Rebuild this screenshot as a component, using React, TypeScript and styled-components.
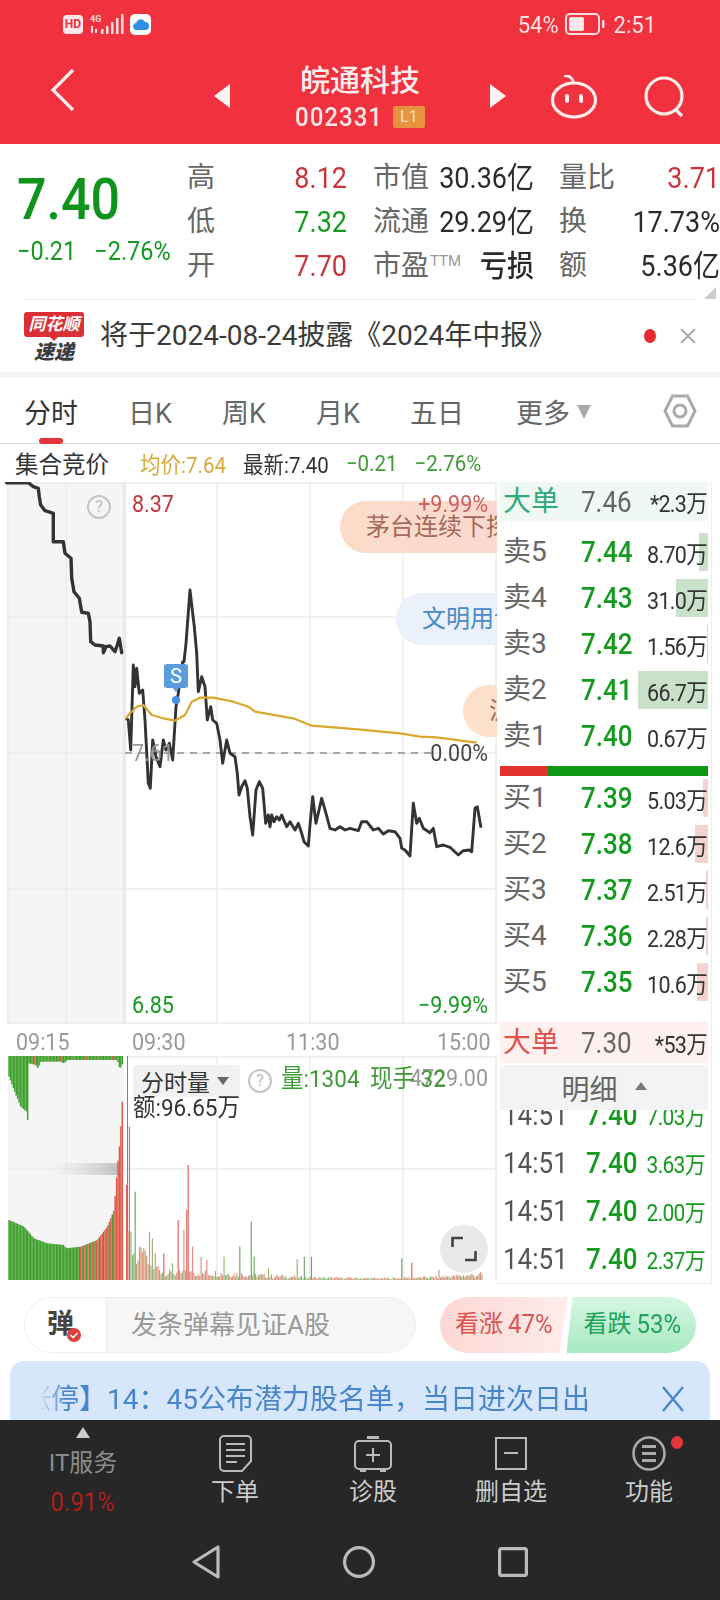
import React from "react";
import styled, { createGlobalStyle, css } from "styled-components";

const GlobalStyle = createGlobalStyle`
  html, body { margin: 0; padding: 0; background: #fff; }
  body { font-family: Roboto, "Noto Sans CJK SC", sans-serif; width: 720px; }
  * { box-sizing: border-box; }
`;

const GREEN = "#149a1f";
const RED = "#c9343c";
const tall = css`
  display: inline-block;
  transform: scaleY(1.1);
  white-space: nowrap;
`;

const Page = styled.div`
  width: 720px;
  height: 1600px;
  overflow: hidden;
  display: flex;
  flex-direction: column;
  background: #fff;
`;

/* ---------- red header ---------- */
const RedHeader = styled.header`
  height: 144px;
  background: #f2313e;
  color: #fff;
`;
const StatusBar = styled.div`
  height: 50px;
  display: flex;
  align-items: center;
  padding: 0 64px 2px 63px;
`;
const HdBadge = styled.span`
  width: 20px;
  height: 19px;
  border-radius: 4px;
  background: #fde9ea;
  color: #e8323f;
  font: 700 12px/19px Roboto, sans-serif;
  text-align: center;
`;
const CloudBadge = styled.span`
  width: 21px;
  height: 21px;
  border-radius: 5px;
  background: #fff;
  margin-left: 6px;
  display: flex;
  align-items: center;
  justify-content: center;
`;
const StatusSpacer = styled.div`
  flex: 1;
`;
const StatusText = styled.span`
  ${tall};
  font-size: 22px;
  color: #fbe3e4;
`;
const Battery = styled.svg`
  margin: 0 9px 0 6px;
`;
const NavRow = styled.div`
  height: 94px;
  display: grid;
  grid-template-columns: 214px 16px 260px 16px 1fr;
  align-items: center;
`;
const BackCell = styled.div`
  padding: 0 0 14px 50px;
  display: flex;
`;
const SideTri = styled.svg`
  margin-bottom: 2px;
`;
const TitleCell = styled.div`
  display: flex;
  flex-direction: column;
  align-items: center;
`;
const StockName = styled.div`
  font-size: 30px;
  line-height: 36px;
  font-weight: 500;
  color: #fbeeee;
  margin-top: 0;
`;
const CodeRow = styled.div`
  display: flex;
  align-items: center;
  gap: 10px;
  height: 28px;
  margin-top: 4px;
`;
const StockCode = styled.span`
  ${tall};
  font-size: 24px;
  font-weight: 500;
  letter-spacing: 1px;
  color: #fbe9e9;
`;
const LevelBadge = styled.span`
  width: 32px;
  height: 22px;
  background: #e9923f;
  border-radius: 2px;
  color: #fbe0c4;
  font-size: 16px;
  line-height: 22px;
  text-align: center;
`;
const HeaderIcons = styled.div`
  display: flex;
  align-items: center;
  padding-left: 44px;
  gap: 46px;
`;

/* ---------- quote ---------- */
const QuoteGrid = styled.section`
  height: 155px;
  position: relative;
  display: grid;
  grid-template-columns: 187px 80px 80px 26px 64px 97px 25px 60px 101px;
  grid-template-rows: repeat(3, 44px);
  padding-top: 12px;
  align-items: center;
`;
const PriceBlock = styled.div`
  grid-row: 1 / span 3;
  grid-column: 1;
  padding-left: 17px;
  align-self: start;
`;
const BigPrice = styled.div`
  ${tall};
  font-size: 52px;
  line-height: 64px;
  margin-top: 12px;
  font-weight: 500;
  color: #0f931b;
`;
const PriceChanges = styled.div`
  display: flex;
  gap: 18px;
  margin-top: 5px;
  line-height: 28px;
`;
const ChangeText = styled.span`
  ${tall};
  font-size: 23.5px;
  color: #149a1f;
`;
const QuoteLabel = styled.span<{ $col: number }>`
  grid-column: ${(p) => p.$col};
  font-size: 28px;
  line-height: 36px;
  color: #666;
  white-space: nowrap;
`;
const Ttm = styled.sup`
  font-size: 15px;
  line-height: 0;
  color: #999;
  vertical-align: 9px;
  margin-left: 1px;
`;
const QuoteValue = styled.span<{ $col: number; $color?: string; $weight?: number }>`
  ${tall};
  grid-column: ${(p) => p.$col};
  justify-self: end;
  font-size: 27px;
  line-height: 36px;
  color: ${(p) => p.$color || "#2a2a2a"};
  font-weight: ${(p) => p.$weight || 400};
`;
const CornerMark = styled.span`
  position: absolute;
  right: 4px;
  bottom: 0;
  width: 0;
  height: 0;
  border-left: 12px solid transparent;
  border-bottom: 12px solid #ccc;
`;

/* ---------- notice ---------- */
const NoticeRow = styled.section`
  margin: 0 24px;
  border-top: 1px solid #eee;
  height: 73px;
  display: flex;
  align-items: center;
`;
const BrandLogo = styled.div`
  width: 60px;
  display: flex;
  flex-direction: column;
  align-items: center;
  margin-top: 4px;
`;
const BrandFlag = styled.span`
  position: relative;
  width: 60px;
  height: 25px;
  background: #dc2f35;
  border-radius: 3px;
  color: #fff;
  font-size: 17px;
  line-height: 25px;
  font-style: italic;
  font-weight: 700;
  text-align: center;
  &::after {
    content: "";
    position: absolute;
    left: 25px;
    bottom: -4px;
    border-top: 5px solid #dc2f35;
    border-left: 5px solid transparent;
    border-right: 5px solid transparent;
  }
`;
const BrandName = styled.span`
  font-size: 20px;
  line-height: 24px;
  font-style: italic;
  font-weight: 900;
  color: #3c3c3c;
  margin-top: 3px;
`;
const NoticeText = styled.div`
  margin-left: 16px;
  flex: 1;
  font-size: 28px;
  line-height: 40px;
  color: #3a3a3a;
  white-space: nowrap;
`;
const NoticeDot = styled.span`
  width: 12px;
  height: 14px;
  border-radius: 50%;
  background: #e4282e;
  margin-right: 24px;
`;
const GapBand = styled.div`
  height: 6px;
  background: #f5f5f5;
`;

/* ---------- tabs ---------- */
const TabBar = styled.nav`
  height: 66px;
  border-bottom: 1px solid #ddd;
  display: grid;
  grid-template-columns: 104px 94px 94px 94px 106px 147px 1fr;
  padding: 0 24px 0 24px;
  align-items: center;
`;
const Tab = styled.div<{ $active?: boolean }>`
  position: relative;
  display: flex;
  align-items: center;
  height: 66px;
  font-size: 27px;
  color: ${(p) => (p.$active ? "#333" : "#666")};
  ${(p) =>
    p.$active &&
    css`
      &::after {
        content: "";
        position: absolute;
        left: 15px;
        bottom: 0;
        width: 24px;
        height: 6px;
        border-radius: 3px;
        background: #e4343c;
      }
    `}
`;
const TabCaret = styled.span`
  width: 0;
  height: 0;
  margin: 2px 0 0 7px;
  border-top: 14px solid #aaa;
  border-left: 7px solid transparent;
  border-right: 7px solid transparent;
`;
const SettingsCell = styled.div`
  justify-self: end;
  display: flex;
`;

const InfoRow = styled.div`
  height: 38px;
  display: flex;
  align-items: center;
  padding-left: 15px;
  gap: 17px;
`;
const AuctionTitle = styled.span`
  font-size: 23.5px;
  color: #333;
  margin-right: 14px;
`;
const InfoStat = styled.span<{ $color: string }>`
  ${tall};
  font-size: 20.5px;
  color: ${(p) => p.$color};
`;

/* ---------- main ---------- */
const MainGrid = styled.section`
  height: 798px;
  display: grid;
  grid-template-columns: 497px 215px;
`;
const ChartColumn = styled.div`
  display: flex;
  flex-direction: column;
`;
const PriceChart = styled.div`
  position: relative;
  height: 542px;
  overflow: hidden;
`;
const ChartSvg = styled.svg`
  position: absolute;
  inset: 0;
  display: block;
`;
const ChartLabel = styled.span<{ $color: string; $top: number; $left?: number; $right?: number; $size?: number }>`
  ${tall};
  position: absolute;
  top: ${(p) => p.$top}px;
  ${(p) => (p.$left !== undefined ? `left:${p.$left}px;` : "")}
  ${(p) => (p.$right !== undefined ? `right:${p.$right}px;` : "")}
  font-size: ${(p) => p.$size || 21.5}px;
  line-height: 26px;
  color: ${(p) => p.$color};
`;
const FloatPill = styled.div<{ $top: number; $left: number; $bg: string; $color: string }>`
  position: absolute;
  top: ${(p) => p.$top}px;
  left: ${(p) => p.$left}px;
  height: 52px;
  border-radius: 26px;
  padding: 0 0 0 26px;
  width: 300px;
  background: ${(p) => p.$bg};
  color: ${(p) => p.$color};
  font-size: 24px;
  line-height: 52px;
  white-space: nowrap;
`;
const HelpCircle = styled.span<{ $top: number; $left: number }>`
  position: absolute;
  top: ${(p) => p.$top}px;
  left: ${(p) => p.$left}px;
  width: 24px;
  height: 24px;
  border: 2px solid #c4c4c4;
  border-radius: 50%;
  color: #bbb;
  font-size: 16px;
  line-height: 20px;
  text-align: center;
`;
const SignalBadge = styled.span`
  position: absolute;
  left: 164px;
  top: 182px;
  width: 24px;
  height: 24px;
  border-radius: 3px;
  background: #5a9bdf;
  color: #fff;
  font-size: 20px;
  line-height: 24px;
  text-align: center;
  &::after {
    content: "";
    position: absolute;
    left: 8px;
    bottom: -4px;
    border-top: 5px solid #5a9bdf;
    border-left: 4px solid transparent;
    border-right: 4px solid transparent;
  }
`;
const TimeAxis = styled.div`
  height: 32px;
  display: grid;
  grid-template-columns: 116px 154px 151px 1fr;
  padding: 2px 9px 0 16px;
  align-items: center;
`;
const TimeTick = styled.span<{ $end?: boolean }>`
  ${tall};
  font-size: 21.5px;
  color: #999;
  justify-self: ${(p) => (p.$end ? "end" : "start")};
`;
const VolumeChart = styled.div`
  position: relative;
  height: 224px;
  overflow: hidden;
`;
const VolumeChip = styled.div`
  position: absolute;
  left: 133px;
  top: 9px;
  width: 107px;
  height: 32px;
  background: #f1f1f1;
  border-radius: 3px;
  display: flex;
  align-items: center;
  padding-left: 8px;
  font-size: 23px;
  color: #333;
  &::after {
    content: "";
    margin-left: 7px;
    border-top: 8px solid #666;
    border-left: 6px solid transparent;
    border-right: 6px solid transparent;
  }
`;
const ExpandButton = styled.span`
  position: absolute;
  left: 440px;
  top: 169px;
  width: 48px;
  height: 48px;
  border-radius: 50%;
  background: #e9e9e9;
  display: flex;
  align-items: center;
  justify-content: center;
`;

/* ---------- order book ---------- */
const BookPanel = styled.aside`
  padding: 0 3px;
  border-right: 1px solid #eee;
  border-bottom: 1px solid #eee;
  display: flex;
  flex-direction: column;
`;
const BigOrder = styled.div<{ $tint: string; $top: number; $h: number }>`
  height: ${(p) => p.$h}px;
  margin-top: ${(p) => p.$top}px;
  background: ${(p) => p.$tint};
  display: grid;
  grid-template-columns: 78px 60px 1fr;
  padding: 0 1px 0 3px;
  align-items: center;
  flex: none;
`;
const BigLabel = styled.span<{ $color: string }>`
  font-size: 28px;
  line-height: 36px;
  color: ${(p) => p.$color};
`;
const BigPriceCell = styled.span`
  ${tall};
  font-size: 26px;
  color: #666;
`;
const VolumeCell = styled.span<{ $color?: string; $size?: number }>`
  ${tall};
  justify-self: end;
  position: relative;
  font-size: ${(p) => p.$size || 21.5}px;
  letter-spacing: -0.7px;
  color: ${(p) => p.$color || "#333"};
`;
const BookRows = styled.div<{ $top: number }>`
  margin-top: ${(p) => p.$top}px;
  flex: none;
`;
const BookRow = styled.div`
  position: relative;
  height: 46px;
  display: grid;
  grid-template-columns: 78px 60px 1fr;
  padding: 0 1px 0 3px;
  align-items: center;
`;
const DepthBar = styled.span<{ $color: string }>`
  position: absolute;
  top: 4px;
  bottom: 4px;
  right: 0;
  background: ${(p) => p.$color};
`;
const BookLabel = styled.span`
  position: relative;
  font-size: 28px;
  line-height: 36px;
  color: #666;
`;
const BookPrice = styled.span`
  ${tall};
  position: relative;
  font-size: 26px;
  font-weight: 500;
  color: ${GREEN};
`;
const SplitBar = styled.div`
  margin-top: 7px;
  height: 10px;
  flex: none;
  background: linear-gradient(90deg, #e5322e 0 48px, #0f9614 48px);
`;
const DetailHeader = styled.div`
  margin-top: 2px;
  height: 45px;
  flex: none;
  background: #f3f3f3;
  color: #666;
  font-size: 28px;
  display: flex;
  align-items: center;
  justify-content: center;
  position: relative;
  z-index: 1;
  &::after {
    content: "";
    margin: 0 0 4px 17px;
    border-bottom: 8px solid #777;
    border-left: 6px solid transparent;
    border-right: 6px solid transparent;
  }
`;
const TickList = styled.div`
  flex: 1;
  overflow: hidden;
`;
const TickRows = styled.div`
  margin-top: -19px;
`;
const TickRow = styled.div`
  height: 48px;
  display: grid;
  grid-template-columns: 83px 60px 1fr;
  padding: 0 3px;
  align-items: center;
`;
const TickTime = styled.span`
  ${tall};
  font-size: 26px;
  color: #555;
`;
const TickPrice = styled.span`
  ${tall};
  font-size: 26px;
  font-weight: 500;
  color: ${GREEN};
`;

/* ---------- barrage ---------- */
const BarrageRow = styled.section`
  height: 81px;
  padding: 17px 24px 0;
  display: flex;
  justify-content: space-between;
`;
const BarrageInput = styled.div`
  width: 392px;
  height: 56px;
  border: 1px solid #eee;
  border-radius: 28px;
  background: #f6f6f6;
  display: flex;
  overflow: hidden;
`;
const BarrageIcon = styled.div`
  position: relative;
  width: 82px;
  background: #fff;
  border-right: 1px solid #eee;
  color: #444;
  font-size: 27px;
  font-weight: 700;
  line-height: 52px;
  padding-left: 22px;
`;
const BarrageCheck = styled.svg`
  position: absolute;
  left: 42px;
  top: 30px;
`;
const BarragePlaceholder = styled.div`
  padding-left: 24px;
  font-size: 26px;
  line-height: 54px;
  color: #999;
`;
const VoteGroup = styled.div`
  width: 256px;
  height: 56px;
  display: flex;
`;
const VoteButton = styled.div<{ $up?: boolean }>`
  flex: 1;
  font-size: 24px;
  line-height: 54px;
  white-space: nowrap;
  ${(p) =>
    p.$up
      ? css`
          margin-right: -1px;
          padding-left: 15px;
          color: #d9534f;
          background: linear-gradient(90deg, #fcd7d4, #fdeceb);
          border-radius: 28px 0 0 28px;
          clip-path: polygon(0 0, 100% 0, calc(100% - 8px) 100%, 0 100%);
        `
      : css`
          padding-left: 17px;
          color: #1ea35a;
          background: linear-gradient(180deg, #d5f6e2, #a8e9c0);
          border-radius: 0 28px 28px 0;
          clip-path: polygon(6px 0, 100% 0, 100% 100%, 0 100%);
        `}
`;
const VoteNumber = styled.span`
  ${tall};
  margin-left: 5px;
  font-size: 24px;
`;
const BlueBar = styled.section`
  margin: 0 10px;
  height: 59px;
  background: #d6e6fb;
  border-radius: 14px 14px 0 0;
  display: flex;
  align-items: flex-start;
  padding: 19px 26px 0 30px;
  overflow: hidden;
`;
const BlueTextClip = styled.div`
  flex: 1;
  overflow: hidden;
  -webkit-mask-image: linear-gradient(90deg, transparent 0, #000 26px);
  mask-image: linear-gradient(90deg, transparent 0, #000 26px);
`;
const BlueText = styled.div`
  margin-left: -17px;
  font-size: 28px;
  line-height: 40px;
  color: #4a84cc;
  white-space: nowrap;
`;

/* ---------- bottom ---------- */
const DarkFooter = styled.footer`
  flex: 1;
  background: #272727;
  display: flex;
  flex-direction: column;
`;
const ToolRow = styled.div`
  height: 110px;
  display: grid;
  grid-template-columns: 166px repeat(4, 138px);
`;
const SectorCell = styled.div`
  display: flex;
  flex-direction: column;
  align-items: center;
  padding-top: 7px;
  &::before {
    content: "";
    border-bottom: 11px solid #ccc;
    border-left: 7px solid transparent;
    border-right: 7px solid transparent;
  }
`;
const SectorName = styled.span`
  margin-top: 11px;
  font-size: 24px;
  line-height: 28px;
  color: #8c8c8c;
`;
const SectorRate = styled.span`
  ${tall};
  margin-top: 11px;
  font-size: 24px;
  line-height: 28px;
  color: #b21f1f;
`;
const ToolItem = styled.div`
  position: relative;
  display: flex;
  flex-direction: column;
  align-items: center;
  padding-top: 15px;
`;
const ToolIconBox = styled.div`
  height: 37px;
  display: flex;
  align-items: center;
`;
const ToolLabel = styled.span`
  margin-top: 6px;
  font-size: 24px;
  line-height: 28px;
  color: #ccc;
`;
const RedDot = styled.span`
  position: absolute;
  left: 91px;
  top: 16px;
  width: 12px;
  height: 13px;
  border-radius: 50%;
  background: #e8343c;
`;
const SystemNav = styled.div`
  padding: 15px 0 0 192px;
  display: flex;
  align-items: center;
  gap: 123px;
`;

/* ---------- chart data ---------- */
type P = [number, number];
const toPoly = (pts: P[], oy: number) => pts.map(([x, y]) => `${(x / 3).toFixed(1)},${(y / 3 + oy).toFixed(1)}`).join(" ");

const pre: P[] = [[20,8],[85,8],[100,20],[115,25],[118,50],[122,75],[135,92],[160,100],[160,185],[190,185],[195,220],[213,235],[215,295],[222,335],[238,355],[245,397],[265,400],[270,425],[272,485],[285,495],[310,498],[310,518],[318,500],[330,498],[345,515],[352,495],[358,475],[365,518]];
const intraday: P[] = [[378,715],[385,720],[392,810],[400,555],[405,620],[410,565],[418,640],[428,630],[435,720],[445,910],[451,925],[458,780],[468,830],[480,860],[490,780],[498,810],[508,790],[518,840],[528,680],[535,640],[540,600],[548,545],[552,545],[558,490],[570,330],[578,400],[583,440],[590,520],[595,635],[605,590],[615,620],[622,720],[632,680],[638,720],[650,730],[660,780],[668,850],[680,780],[690,820],[705,830],[712,880],[717,945],[725,920],[735,902],[742,925],[750,1010],[758,1065],[768,930],[778,905],[788,925],[797,1030],[805,1005],[810,1040],[815,1005],[822,1025],[830,1010],[838,1020],[845,1005],[860,1040],[870,1025],[885,1050],[895,1030],[905,1060],[912,1085],[925,1098],[930,1035],[938,950],[948,1030],[965,955],[978,1000],[990,1045],[1005,1050],[1020,1040],[1035,1050],[1050,1045],[1075,1052],[1085,1025],[1100,1025],[1120,1050],[1135,1045],[1150,1062],[1165,1052],[1185,1055],[1200,1075],[1205,1105],[1215,1110],[1230,1128],[1240,970],[1250,1030],[1258,1015],[1270,1045],[1290,1058],[1300,1045],[1310,1100],[1330,1095],[1350,1102],[1375,1125],[1390,1112],[1408,1110],[1415,1115],[1425,985],[1432,980],[1443,1043]];
const avg: P[] = [[378,715],[390,700],[410,680],[430,675],[455,705],[490,715],[525,722],[555,705],[575,665],[600,653],[640,653],[700,665],[745,680],[765,695],[880,715],[935,737],[1075,748],[1200,760],[1260,770],[1310,772],[1430,788]];

const interp = (pts: P[], x: number) => {
  if (x <= pts[0][0]) return pts[0][1];
  for (let i = 1; i < pts.length; i++) {
    if (x <= pts[i][0]) {
      const [a, b] = pts[i - 1];
      const [c, d] = pts[i];
      return b + ((d - b) * (x - a)) / (c - a);
    }
  }
  return pts[pts.length - 1][1];
};
const rand = (i: number) => {
  const s = Math.sin(i * 12.9898) * 43758.5453;
  return s - Math.floor(s);
};
const hangEnv: P[] = [[25,80],[40,120],[60,170],[78,185],[82,220],[85,40],[105,45],[112,55],[120,35],[180,35],[190,40],[200,30],[350,30],[358,58],[368,35]];
const riseEnv: P[] = [[25,510],[70,530],[100,565],[140,580],[190,585],[195,595],[240,590],[290,570],[320,530],[340,480],[350,350],[358,270],[365,150]];
const baseEnv: P[] = [[378,560],[420,610],[500,665],[650,665],[800,675],[950,682],[1150,684],[1300,680],[1445,670]];
const peaks: P[] = [[385,230],[378,405],[392,545],[405,425],[418,590],[430,595],[445,545],[455,565],[465,610],[488,610],[515,640],[533,510],[548,540],[565,345],[560,480],[575,590],[600,620],[620,630],[670,620],[717,590],[750,515],[760,620],[805,655],[888,628],[910,620],[932,620],[1205,625],[1235,638],[1315,660]];
const redPeaks = [385, 378, 533, 565, 560, 488, 1235];
const greenPeaks = [405, 750, 717, 760, 1205, 910, 932];

const preBars = Array.from({ length: 80 }, (_, i) => {
  const zx = 25 + i * 4.3;
  return { x: zx / 3, hang: interp(hangEnv, zx) / 3 - 6, top: interp(riseEnv, zx) / 3 - 6, col: zx < 240 || (zx < 345 && i % 3 === 0) ? "#3fa02d" : "#e25a4a" };
});
const dayBars = Array.from({ length: 249 }, (_, i) => {
  const zx = 378 + i * 4.3;
  const base = interp(baseEnv, zx);
  let top = 690 - (690 - base) * (0.35 + 0.9 * rand(i));
  let col = "";
  const r = rand(i + 500);
  col = r < 0.33 ? "#8cb878" : r < 0.66 ? "#e88a80" : "#c0a070";
  for (const [px, py] of peaks) {
    if (Math.abs(px - zx) < 2.2) {
      top = py;
      if (redPeaks.includes(px)) col = "#e0605a";
      if (greenPeaks.includes(px)) col = "#6aa860";
    }
  }
  return { x: zx / 3, top: top / 3 - 6, col };
});

const BookData = [
  ["卖5", "7.44", "8.70万", 9],
  ["卖4", "7.43", "31.0万", 32],
  ["卖3", "7.42", "1.56万", 1],
  ["卖2", "7.41", "66.7万", 70],
  ["卖1", "7.40", "0.67万", 0],
] as const;
const BuyData = [
  ["买1", "7.39", "5.03万", 5],
  ["买2", "7.38", "12.6万", 13],
  ["买3", "7.37", "2.51万", 2],
  ["买4", "7.36", "2.28万", 2],
  ["买5", "7.35", "10.6万", 11],
] as const;
const Ticks = ["7.03万", "3.63万", "2.00万", "2.37万"];
const vGrid = [66, 217, 310, 403, 496];

export default function App() {
  return (
    <Page>
      <GlobalStyle />
      <RedHeader>
        <StatusBar>
          <HdBadge>HD</HdBadge>
          <svg width="34" height="22" viewBox="0 0 34 22" style={{ marginLeft: 7 }}>
            <text x="0" y="9" fontSize="9" fontWeight="700" fill="#fbdcdc" fontFamily="Roboto">4G</text>
            <g fill="#fbdcdc">
              <rect x="1" y="13" width="2" height="7" /><rect x="5" y="16" width="2" height="4" />
              <rect x="11" y="16" width="2.5" height="5" /><rect x="16" y="13" width="2.5" height="8" />
              <rect x="21" y="9" width="2.5" height="12" /><rect x="26" y="5" width="2.5" height="16" /><rect x="31" y="1" width="2.5" height="20" />
            </g>
          </svg>
          <CloudBadge>
            <svg width="16" height="12" viewBox="0 0 16 12"><path d="M4 12a3.5 3.5 0 0 1-.6-7A4.5 4.5 0 0 1 12 4a4 4 0 0 1 0 8z" fill="#2d8fe6" /></svg>
          </CloudBadge>
          <StatusSpacer />
          <StatusText>54%</StatusText>
          <Battery width="40" height="22" viewBox="0 0 40 22">
            <rect x="1" y="1" width="33" height="20" rx="4" fill="none" stroke="#fbdcdc" strokeWidth="2" />
            <rect x="4" y="4" width="15" height="14" rx="2" fill="#fbe9e9" />
            <rect x="37" y="7" width="2.5" height="8" rx="1" fill="#fbdcdc" />
          </Battery>
          <StatusText>2:51</StatusText>
        </StatusBar>
        <NavRow>
          <BackCell>
            <svg width="26" height="44" viewBox="0 0 26 44"><path d="M23 2 3 22l20 20" fill="none" stroke="#fdeeee" strokeWidth="3.2" /></svg>
          </BackCell>
          <SideTri width="16" height="24" viewBox="0 0 16 24"><path d="M16 0v24L0 12z" fill="#fdf2f2" /></SideTri>
          <TitleCell>
            <StockName>皖通科技</StockName>
            <CodeRow>
              <StockCode>002331</StockCode>
              <LevelBadge>L1</LevelBadge>
            </CodeRow>
          </TitleCell>
          <SideTri width="16" height="24" viewBox="0 0 16 24"><path d="M0 0v24l16-12z" fill="#fdf2f2" /></SideTri>
          <HeaderIcons>
            <svg width="48" height="44" viewBox="0 0 48 44" fill="none" stroke="#fdeeee" strokeWidth="3.2">
              <path d="M14 1c5-1 9 2 10 8" strokeWidth="2.8" />
              <ellipse cx="24" cy="25" rx="21.5" ry="17" />
              <rect x="15" y="19" width="4" height="9" rx="2" fill="#fdeeee" stroke="none" />
              <rect x="29" y="19" width="4" height="9" rx="2" fill="#fdeeee" stroke="none" />
            </svg>
            <svg width="42" height="42" viewBox="0 0 42 42" fill="none" stroke="#fdeeee" strokeWidth="3.2">
              <circle cx="20" cy="20" r="18" />
              <path d="m31 33 7 7" />
            </svg>
          </HeaderIcons>
        </NavRow>
      </RedHeader>

      <QuoteGrid>
        <PriceBlock>
          <BigPrice>7.40</BigPrice>
          <PriceChanges>
            <ChangeText>−0.21</ChangeText>
            <ChangeText>−2.76%</ChangeText>
          </PriceChanges>
        </PriceBlock>
        <QuoteLabel $col={2}>高</QuoteLabel>
        <QuoteValue $col={3} $color={RED}>8.12</QuoteValue>
        <QuoteLabel $col={5}>市值</QuoteLabel>
        <QuoteValue $col={6}>30.36亿</QuoteValue>
        <QuoteLabel $col={8}>量比</QuoteLabel>
        <QuoteValue $col={9} $color={RED}>3.71</QuoteValue>
        <QuoteLabel $col={2}>低</QuoteLabel>
        <QuoteValue $col={3} $color={GREEN}>7.32</QuoteValue>
        <QuoteLabel $col={5}>流通</QuoteLabel>
        <QuoteValue $col={6}>29.29亿</QuoteValue>
        <QuoteLabel $col={8}>换</QuoteLabel>
        <QuoteValue $col={9}>17.73%</QuoteValue>
        <QuoteLabel $col={2}>开</QuoteLabel>
        <QuoteValue $col={3} $color={RED}>7.70</QuoteValue>
        <QuoteLabel $col={5}>市盈<Ttm>TTM</Ttm></QuoteLabel>
        <QuoteValue $col={6} $weight={500}>亏损</QuoteValue>
        <QuoteLabel $col={8}>额</QuoteLabel>
        <QuoteValue $col={9}>5.36亿</QuoteValue>
        <CornerMark />
      </QuoteGrid>

      <NoticeRow>
        <BrandLogo>
          <BrandFlag>同花顺</BrandFlag>
          <BrandName>速递</BrandName>
        </BrandLogo>
        <NoticeText>将于2024-08-24披露《2024年中报》</NoticeText>
        <NoticeDot />
        <svg width="16" height="16" viewBox="0 0 16 16"><path d="m1 1 14 14M15 1 1 15" stroke="#aaa" strokeWidth="2" /></svg>
      </NoticeRow>
      <GapBand />

      <TabBar>
        <Tab $active>分时</Tab>
        <Tab>日K</Tab>
        <Tab>周K</Tab>
        <Tab>月K</Tab>
        <Tab>五日</Tab>
        <Tab>更多<TabCaret /></Tab>
        <SettingsCell>
          <svg width="34" height="34" viewBox="0 0 34 34" fill="none" stroke="#aaa" strokeWidth="3">
            <path d="M9.5 2h15L32 17l-7.500 15h-15L2 17z" />
            <circle cx="17" cy="17" r="6" />
          </svg>
        </SettingsCell>
      </TabBar>

      <InfoRow>
        <AuctionTitle>集合竞价</AuctionTitle>
        <InfoStat $color="#d8a93a">均价:7.64</InfoStat>
        <InfoStat $color="#333">最新:7.40</InfoStat>
        <InfoStat $color="#3f9a35">−0.21</InfoStat>
        <InfoStat $color="#3f9a35">−2.76%</InfoStat>
      </InfoRow>

      <MainGrid>
        <ChartColumn>
          <PriceChart>
            <ChartSvg width="497" height="542" viewBox="0 0 497 542">
              <rect x="8" y="0" width="116" height="542" fill="#f5f5f5" />
              <g stroke="#ebebeb" strokeWidth="1.5">
                {vGrid.map((x) => <line key={x} x1={x} y1="0" x2={x} y2="542" />)}
                {[1, 135, 271, 407, 541].map((y) => <line key={y} x1="8" y1={y} x2="497" y2={y} />)}
                <line x1="8" y1="0" x2="8" y2="542" />
              </g>
              <line x1="124.500" y1="0" x2="124.500" y2="542" stroke="#e9e9e9" strokeWidth="3" />
              <line x1="125" y1="271" x2="432" y2="271" stroke="#a8a8a8" strokeWidth="2" strokeDasharray="7 6" />
              <polyline points={toPoly(pre, -2)} fill="none" stroke="#333" strokeWidth="3.4" strokeLinejoin="round" strokeLinecap="round" />
              <polyline points={toPoly(intraday, -2)} fill="none" stroke="#333" strokeWidth="2.9" strokeLinejoin="round" />
              <polyline points={toPoly(avg, -2)} fill="none" stroke="#d8a82c" strokeWidth="2.2" strokeLinejoin="round" />
              <circle cx="176" cy="218" r="4" fill="#4a8fe0" />
            </ChartSvg>
            <HelpCircle $top={13} $left={87}>?</HelpCircle>
            <FloatPill $top={19} $left={340} $bg="linear-gradient(90deg,#fbdcc8,#fcd5d5)" $color="#a5685a">茅台连续下探</FloatPill>
            <FloatPill $top={111} $left={396} $bg="#eaf1fb" $color="#4a8ac8">文明用语</FloatPill>
            <FloatPill $top={203} $left={463} $bg="#fbe0cc" $color="#a5685a">沪</FloatPill>
            <SignalBadge>S</SignalBadge>
            <ChartLabel $top={9} $left={132} $color="#c0353a">8.37</ChartLabel>
            <ChartLabel $top={9} $right={9} $color="#c9605a">+9.99%</ChartLabel>
            <ChartLabel $top={258} $left={132} $color="#999">7.61</ChartLabel>
            <ChartLabel $top={258} $right={9} $color="#444">0.00%</ChartLabel>
            <ChartLabel $top={510} $left={132} $color={GREEN}>6.85</ChartLabel>
            <ChartLabel $top={510} $right={9} $color={GREEN}>−9.99%</ChartLabel>
          </PriceChart>
          <TimeAxis>
            <TimeTick>09:15</TimeTick>
            <TimeTick>09:30</TimeTick>
            <TimeTick>11:30</TimeTick>
            <TimeTick $end>15:00</TimeTick>
          </TimeAxis>
          <VolumeChart>
            <ChartSvg width="497" height="224" viewBox="0 0 497 224">
              <defs>
                <linearGradient id="smear" x1="0" x2="1" y1="0" y2="0">
                  <stop offset="0" stopColor="#d8d8d8" stopOpacity="0" />
                  <stop offset="1" stopColor="#b0b0b0" stopOpacity="0.8" />
                </linearGradient>
              </defs>
              <rect x="8" y="0" width="116" height="224" fill="#f5f5f5" />
              <g stroke="#ebebeb" strokeWidth="1.5">
                {vGrid.map((x) => <line key={x} x1={x} y1="0" x2={x} y2="224" />)}
                <line x1="8" y1="113" x2="497" y2="113" />
                <line x1="8" y1="1" x2="497" y2="1" />
              </g>
              <rect x="48" y="107" width="72" height="12" fill="url(#smear)" />
              {preBars.map((b, i) => (
                <g key={i}>
                  <rect x={b.x} y="0" width="1.45" height={Math.max(b.hang, 0)} fill={b.x * 3 < 85 ? "#3fa02d" : i % 9 === 0 ? "#e25a4a" : "#3fa02d"} />
                  <rect x={b.x} y={b.top} width="1.45" height={224 - b.top} fill={b.col} />
                </g>
              ))}
              <line x1="127.500" y1="0" x2="127.500" y2="224" stroke="#d0605a" strokeWidth="1" />
              {dayBars.map((b, i) => <rect key={i} x={b.x} y={b.top} width="1.15" height={224 - b.top} fill={b.col} />)}
            </ChartSvg>
            <VolumeChip>分时量</VolumeChip>
            <HelpCircle $top={13} $left={248}>?</HelpCircle>
            <ChartLabel $top={9} $right={9} $color="#999">4729.00</ChartLabel>
            <ChartLabel $top={9} $left={281} $color="#3f9a35" $size={22.5}>量:1304</ChartLabel>
            <ChartLabel $top={9} $left={370} $color="#3f9a35" $size={22.5}>现手 32</ChartLabel>
            <ChartLabel $top={38} $left={133} $color="#333" $size={22.5}>额:96.65万</ChartLabel>
            <ExpandButton>
              <svg width="26" height="26" viewBox="0 0 26 26" fill="none" stroke="#444" strokeWidth="2.6">
                <path d="M1.500 11V2H12M24.500 15v9H14" />
              </svg>
            </ExpandButton>
          </VolumeChart>
        </ChartColumn>

        <BookPanel>
          <BigOrder $tint="#eff8f3" $top={0} $h={39}>
            <BigLabel $color="#2eaa7e">大单</BigLabel>
            <BigPriceCell>7.46</BigPriceCell>
            <VolumeCell>*2.3万</VolumeCell>
          </BigOrder>
          <BookRows $top={8}>
            {BookData.map(([l, p, v, w]) => (
              <BookRow key={l}>
                {w > 0 && <DepthBar $color="#c9e0c9" style={{ width: w }} />}
                <BookLabel>{l}</BookLabel>
                <BookPrice>{p}</BookPrice>
                <VolumeCell>{v}</VolumeCell>
              </BookRow>
            ))}
          </BookRows>
          <SplitBar />
          <BookRows $top={-1}>
            {BuyData.map(([l, p, v, w]) => (
              <BookRow key={l}>
                <DepthBar $color="#f3d2d2" style={{ width: w }} />
                <BookLabel>{l}</BookLabel>
                <BookPrice>{p}</BookPrice>
                <VolumeCell>{v}</VolumeCell>
              </BookRow>
            ))}
          </BookRows>
          <BigOrder $tint="#fdf0ef" $top={17} $h={41}>
            <BigLabel $color="#e0504a">大单</BigLabel>
            <BigPriceCell>7.30</BigPriceCell>
            <VolumeCell>*53万</VolumeCell>
          </BigOrder>
          <DetailHeader>明细</DetailHeader>
          <TickList>
            <TickRows>
              {Ticks.map((t) => (
                <TickRow key={t}>
                  <TickTime>14:51</TickTime>
                  <TickPrice>7.40</TickPrice>
                  <VolumeCell $color={GREEN} $size={21}>{t}</VolumeCell>
                </TickRow>
              ))}
            </TickRows>
          </TickList>
        </BookPanel>
      </MainGrid>

      <BarrageRow>
        <BarrageInput>
          <BarrageIcon>
            弹
            <BarrageCheck width="14" height="14" viewBox="0 0 14 14">
              <circle cx="7" cy="7" r="7" fill="#e0403c" />
              <path d="m3.500 7 2.500 2.500 4.500-4.500" fill="none" stroke="#fff" strokeWidth="1.600" />
            </BarrageCheck>
          </BarrageIcon>
          <BarragePlaceholder>发条弹幕见证A股</BarragePlaceholder>
        </BarrageInput>
        <VoteGroup>
          <VoteButton $up>看涨<VoteNumber>47%</VoteNumber></VoteButton>
          <VoteButton>看跌<VoteNumber>53%</VoteNumber></VoteButton>
        </VoteGroup>
      </BarrageRow>
      <BlueBar>
        <BlueTextClip>
          <BlueText>涨停】14：45公布潜力股名单，当日进次日出</BlueText>
        </BlueTextClip>
        <svg width="22" height="26" viewBox="0 0 22 26" style={{ marginTop: 6 }}>
          <path d="m1 1 20 24M21 1 1 25" stroke="#4a84cc" strokeWidth="2.400" fill="none" />
        </svg>
      </BlueBar>

      <DarkFooter>
        <ToolRow>
          <SectorCell>
            <SectorName>IT服务</SectorName>
            <SectorRate>0.91%</SectorRate>
          </SectorCell>
          <ToolItem>
            <ToolIconBox>
              <svg width="33" height="37" viewBox="0 0 33 37" fill="none" stroke="#bbb" strokeWidth="2">
                <path d="M5 1h23a4 4 0 0 1 4 4v21l-9 10H5a4 4 0 0 1-4-4V5a4 4 0 0 1 4-4z" />
                <path d="M7 9h19M7 15h19M7 21h19M7 27h11" />
              </svg>
            </ToolIconBox>
            <ToolLabel>下单</ToolLabel>
          </ToolItem>
          <ToolItem>
            <ToolIconBox>
              <svg width="38" height="36" viewBox="0 0 38 36" fill="none" stroke="#bbb" strokeWidth="2">
                <rect x="1" y="5" width="36" height="28" rx="4" />
                <path d="M13 1.500h12" strokeWidth="3" />
                <path d="M6 34.500h6M26 34.500h6" strokeWidth="3" />
                <path d="M19 12v14M12 19h14" />
              </svg>
            </ToolIconBox>
            <ToolLabel>诊股</ToolLabel>
          </ToolItem>
          <ToolItem>
            <ToolIconBox>
              <svg width="32" height="33" viewBox="0 0 32 33" fill="none" stroke="#bbb" strokeWidth="2">
                <rect x="1" y="1" width="30" height="31" />
                <path d="M9 16h14" />
              </svg>
            </ToolIconBox>
            <ToolLabel>删自选</ToolLabel>
          </ToolItem>
          <ToolItem>
            <RedDot />
            <ToolIconBox>
              <svg width="34" height="35" viewBox="0 0 34 35" fill="none" stroke="#aaa" strokeWidth="2.600">
                <ellipse cx="17" cy="17.500" rx="15.500" ry="16" />
                <path d="M10 10.500h14M10 17.500h14M10 24.500h14" strokeWidth="3" />
              </svg>
            </ToolIconBox>
            <ToolLabel>功能</ToolLabel>
          </ToolItem>
        </ToolRow>
        <SystemNav>
          <svg width="28" height="34" viewBox="0 0 28 34" fill="none" stroke="#bbb" strokeWidth="3.200" strokeLinejoin="round">
            <path d="M26 2v30L2 17z" />
          </svg>
          <svg width="32" height="32" viewBox="0 0 32 32" fill="none" stroke="#bbb" strokeWidth="3.200">
            <circle cx="16" cy="16" r="14.400" />
          </svg>
          <svg width="30" height="30" viewBox="0 0 30 30" fill="none" stroke="#bbb" strokeWidth="3.200">
            <rect x="1.600" y="1.600" width="26.800" height="26.800" rx="2" />
          </svg>
        </SystemNav>
      </DarkFooter>
    </Page>
  );
}
